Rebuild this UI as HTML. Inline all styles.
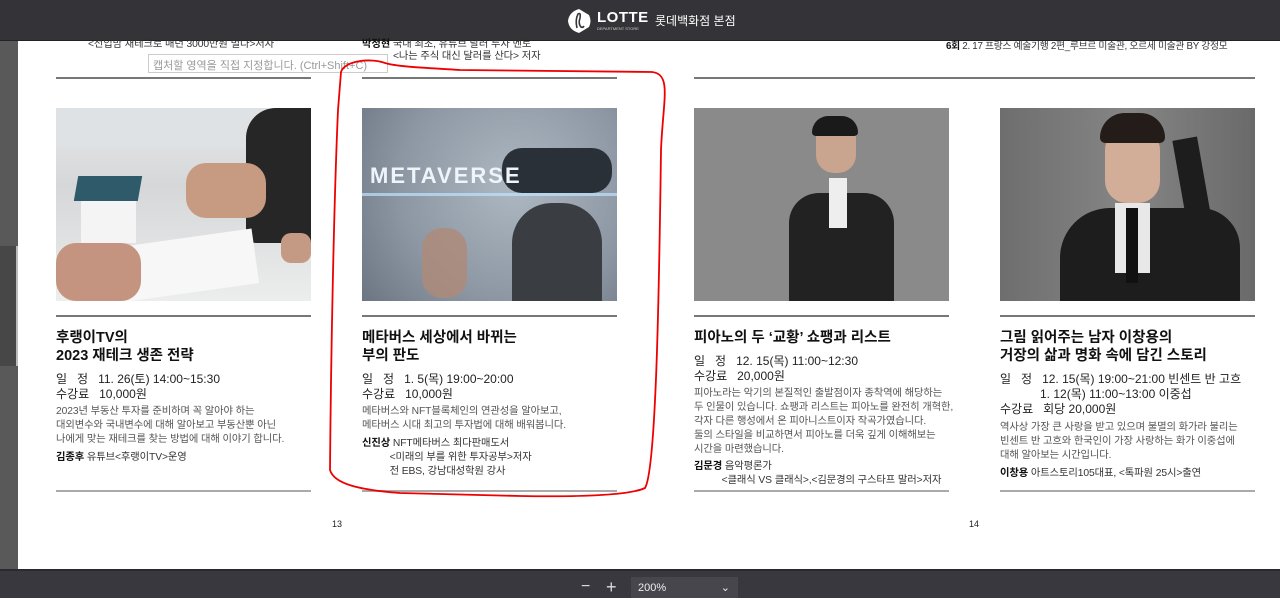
<!DOCTYPE html>
<html><head><meta charset="utf-8"><style>
*{margin:0;padding:0;box-sizing:border-box}
body{width:1280px;height:598px;overflow:hidden;background:#fff;font-family:"Liberation Sans","Noto Sans CJK KR",sans-serif;color:#222;position:relative}
.a{position:absolute;white-space:nowrap}
.top{left:0;top:0;width:1280px;height:41px;background:#343438;border-bottom:1px solid #222}
.strip{left:0;top:41px;width:18px;height:529px;background:#595959}
.bot{left:0;top:569px;width:1280px;height:29px;background:#38383e;border-top:2px solid #2a2a2e}
.img{position:absolute;top:108px;width:255px;height:193px;overflow:hidden}
.ln{position:absolute;height:1.5px;background:#777;width:255px}
.t{font-size:14.5px;font-weight:bold;line-height:18px;color:#111}
.m{font-size:12px;line-height:15px;color:#222}
.d{font-size:10.3px;line-height:14px;color:#555;letter-spacing:-0.1px}
.s{font-size:10.3px;line-height:14px;color:#333;letter-spacing:-0.1px}
b{color:#111}
</style></head><body>
<div class="a top"></div>
<svg class="a" style="left:566px;top:8px" width="26" height="26" viewBox="0 0 26 26"><path d="M13 1 L23 7 Q26 13 23 19 L13 25 Q3 22 2 13 Q3 4 13 1Z" fill="#fff"/><path d="M11 20 Q9 12 12 6 Q15 4 14 10 Q12 16 15 19 Q17 20 18 18" stroke="#343438" stroke-width="1.6" fill="none"/></svg>
<div class="a" style="left:597px;top:9px;color:#fff;font-weight:bold;font-size:15px;letter-spacing:0.5px">LOTTE</div>
<div class="a" style="left:597px;top:26px;color:#ccc;font-size:4px">DEPARTMENT STORE</div>
<div class="a" style="left:655px;top:12px;color:#fff;font-size:12px">롯데백화점 본점</div>
<div class="a strip"></div>
<div class="a" style="left:0;top:246px;width:18px;height:120px;background:#474747;border-right:2px solid #bbb"></div>

<div class="a s" style="left:88px;top:38px">&lt;선입맘 재테크로 매년 3000만원 벌다&gt;저자</div>
<div class="a s" style="left:362px;top:38px"><b>박정현</b> 국내 최초, 유튜브 달러 투자 멘토</div>
<div class="a s" style="left:393px;top:50px">&lt;나는 주식 대신 달러를 산다&gt; 저자</div>
<div class="a" style="left:148px;top:54px;width:240px;height:19px;border:1px solid #ccc;background:#fff;font-size:11px;color:#999;padding:2px 4px;white-space:nowrap">캡처할 영역을 직접 지정합니다. (Ctrl+Shift+C)</div>
<div class="a s" style="left:946px;top:40px;font-size:9.8px;letter-spacing:-0.3px"><b>6회</b> 2. 17 프랑스 예술기행 2편_루브르 미술관, 오르세 미술관 BY 강정모</div>
<div class="ln" style="left:56px;top:77px"></div><div class="ln" style="left:362px;top:77px"></div>
<div class="ln" style="left:694px;top:77px;width:561px"></div>

<!-- images -->
<div class="img" style="left:56px;background:linear-gradient(180deg,#e6e8ea 0%,#d5d7d8 40%,#eceded 100%)">
<div class="a" style="left:0;top:0;width:255px;height:40px;background:#dfe2e4"></div>
<div class="a" style="left:190px;top:0;width:65px;height:135px;background:#262626;border-radius:30px 0 0 10px"></div>
<div class="a" style="left:130px;top:55px;width:80px;height:55px;background:#c79a82;border-radius:20px"></div>
<div class="a" style="left:25px;top:85px;width:55px;height:50px;background:#f4f4f4"></div>
<div class="a" style="left:20px;top:68px;width:64px;height:25px;background:#2f5a6a;transform:skewX(-10deg)"></div>
<div class="a" style="left:60px;top:130px;width:140px;height:55px;background:#f7f7f7;transform:rotate(-8deg)"></div>
<div class="a" style="left:0;top:135px;width:85px;height:58px;background:#c49480;border-radius:20px"></div>
<div class="a" style="left:225px;top:125px;width:30px;height:30px;background:#c49a85;border-radius:10px"></div>
</div>
<div class="img" style="left:362px;background:radial-gradient(circle at 60% 40%,#aeb8c2,#8c97a3 60%,#6b7682)">
<div class="a" style="left:150px;top:95px;width:90px;height:98px;background:#3a3d42;border-radius:40px 40px 0 0"></div>
<div class="a" style="left:140px;top:40px;width:110px;height:45px;background:#2a3038;border-radius:20px"></div>
<div class="a" style="left:8px;top:55px;color:#eef4fa;font-size:22px;font-weight:bold;letter-spacing:2px">METAVERSE</div>
<div class="a" style="left:60px;top:120px;width:45px;height:70px;background:#b08a78;border-radius:20px;opacity:.8"></div>
<div class="a" style="left:0;top:85px;width:255px;height:3px;background:#bfe4ff;opacity:.7"></div>
</div>
<div class="img" style="left:694px;background:#8a8a8a">
<div class="a" style="left:95px;top:85px;width:105px;height:110px;background:#222;border-radius:30px 30px 0 0"></div>
<div class="a" style="left:122px;top:10px;width:40px;height:55px;background:#c9a48e;border-radius:18px"></div>
<div class="a" style="left:118px;top:8px;width:46px;height:20px;background:#1a1a1a;border-radius:18px 18px 4px 4px"></div>
<div class="a" style="left:135px;top:70px;width:18px;height:50px;background:#eee"></div>
</div>
<div class="img" style="left:1000px;background:linear-gradient(90deg,#6e6e6e,#858585 50%,#6a6a6a)">
<div class="a" style="left:60px;top:100px;width:180px;height:95px;background:#1d1d1d;border-radius:50px 40px 0 0"></div>
<div class="a" style="left:105px;top:20px;width:55px;height:75px;background:#d2ad97;border-radius:22px"></div>
<div class="a" style="left:100px;top:5px;width:65px;height:30px;background:#231c18;border-radius:28px 28px 6px 6px"></div>
<div class="a" style="left:115px;top:95px;width:35px;height:70px;background:#e8e8e8"></div>
<div class="a" style="left:126px;top:100px;width:12px;height:75px;background:#111"></div>
<div class="a" style="left:180px;top:30px;width:25px;height:90px;background:#1d1d1d;transform:rotate(-10deg)"></div>
</div>

<div class="ln" style="left:56px;top:315px"></div><div class="ln" style="left:362px;top:315px"></div>
<div class="ln" style="left:694px;top:315px"></div><div class="ln" style="left:1000px;top:315px"></div>
<div class="ln" style="left:56px;top:490px;background:#aaa"></div><div class="ln" style="left:362px;top:490px;background:#aaa"></div>
<div class="ln" style="left:694px;top:490px;background:#aaa"></div><div class="ln" style="left:1000px;top:490px;background:#aaa"></div>

<div class="a" style="left:56px;top:329px">
<div class="t">후랭이TV의<br>2023 재테크 생존 전략</div>
<div class="m" style="margin-top:7px">일&nbsp;&nbsp;&nbsp;정&nbsp;&nbsp;&nbsp;11. 26(토) 14:00~15:30<br>수강료&nbsp;&nbsp;&nbsp;10,000원</div>
<div class="d" style="margin-top:3px">2023년 부동산 투자를 준비하며 꼭 알아야 하는<br>대외변수와 국내변수에 대해 알아보고 부동산뿐 아닌<br>나에게 맞는 재테크를 찾는 방법에 대해 이야기 합니다.</div>
<div class="s" style="margin-top:4px"><b>김종후</b> 유튜브&lt;후랭이TV&gt;운영</div>
</div>
<div class="a" style="left:362px;top:329px">
<div class="t">메타버스 세상에서 바뀌는<br>부의 판도</div>
<div class="m" style="margin-top:7px">일&nbsp;&nbsp;&nbsp;정&nbsp;&nbsp;&nbsp;1. 5(목) 19:00~20:00<br>수강료&nbsp;&nbsp;&nbsp;10,000원</div>
<div class="d" style="margin-top:3px">메타버스와 NFT블록체인의 연관성을 알아보고,<br>메타버스 시대 최고의 투자법에 대해 배워봅니다.</div>
<div class="s" style="margin-top:4px"><b>신진상</b> NFT메타버스 최다판매도서<br>&nbsp;&nbsp;&nbsp;&nbsp;&nbsp;&nbsp;&nbsp;&nbsp;&nbsp;&nbsp;&lt;미래의 부를 위한 투자공부&gt;저자<br>&nbsp;&nbsp;&nbsp;&nbsp;&nbsp;&nbsp;&nbsp;&nbsp;&nbsp;&nbsp;전 EBS, 강남대성학원 강사</div>
</div>
<div class="a" style="left:694px;top:329px">
<div class="t">피아노의 두 ‘교황’ 쇼팽과 리스트</div>
<div class="m" style="margin-top:7px">일&nbsp;&nbsp;&nbsp;정&nbsp;&nbsp;&nbsp;12. 15(목) 11:00~12:30<br>수강료&nbsp;&nbsp;&nbsp;20,000원</div>
<div class="d" style="margin-top:3px">피아노라는 악기의 본질적인 출발점이자 종착역에 해당하는<br>두 인물이 있습니다. 쇼팽과 리스트는 피아노를 완전히 개혁한,<br>각자 다른 행성에서 온 피아니스트이자 작곡가였습니다.<br>둘의 스타일을 비교하면서 피아노를 더욱 깊게 이해해보는<br>시간을 마련했습니다.</div>
<div class="s" style="margin-top:3px"><b>김문경</b> 음악평론가<br>&nbsp;&nbsp;&nbsp;&nbsp;&nbsp;&nbsp;&nbsp;&nbsp;&nbsp;&nbsp;&lt;클래식 VS 클래식&gt;,&lt;김문경의 구스타프 말러&gt;저자</div>
</div>
<div class="a" style="left:1000px;top:329px">
<div class="t">그림 읽어주는 남자 이창용의<br>거장의 삶과 명화 속에 담긴 스토리</div>
<div class="m" style="margin-top:7px">일&nbsp;&nbsp;&nbsp;정&nbsp;&nbsp;&nbsp;12. 15(목) 19:00~21:00 빈센트 반 고흐<br>&nbsp;&nbsp;&nbsp;&nbsp;&nbsp;&nbsp;&nbsp;&nbsp;&nbsp;&nbsp;&nbsp;&nbsp;1. 12(목) 11:00~13:00 이중섭<br>수강료&nbsp;&nbsp;&nbsp;회당 20,000원</div>
<div class="d" style="margin-top:4px">역사상 가장 큰 사랑을 받고 있으며 불멸의 화가라 불리는<br>빈센트 반 고흐와 한국인이 가장 사랑하는 화가 이중섭에<br>대해 알아보는 시간입니다.</div>
<div class="s" style="margin-top:4px"><b>이창용</b> 아트스토리105대표, &lt;톡파원 25시&gt;출연</div>
</div>

<div class="a" style="left:332px;top:519px;font-size:9px">13</div>
<div class="a" style="left:969px;top:519px;font-size:9px">14</div>

<svg class="a" style="left:0;top:0" width="1280" height="598"><path d="M385 63 C372 58 345 60 341 72 L338 110 C334 200 331 350 330 470 C334 484 360 490 400 493 L520 496 C580 497 630 495 645 488 C656 470 659 300 661 150 C663 100 672 74 652 72 L460 70 C430 68 398 67 385 63" stroke="#e00" stroke-width="1.8" fill="none"/></svg>

<div class="a bot"></div>
<div class="a" style="left:581px;top:578px;color:#ddd;font-size:16px">−</div>
<div class="a" style="left:606px;top:577px;color:#ddd;font-size:18px">+</div>
<div class="a" style="left:631px;top:577px;width:107px;height:21px;background:#46464c;color:#eee;font-size:11px;padding:5px 7px">200%<span style="position:absolute;right:8px;top:4px">⌄</span></div>
</body></html>
